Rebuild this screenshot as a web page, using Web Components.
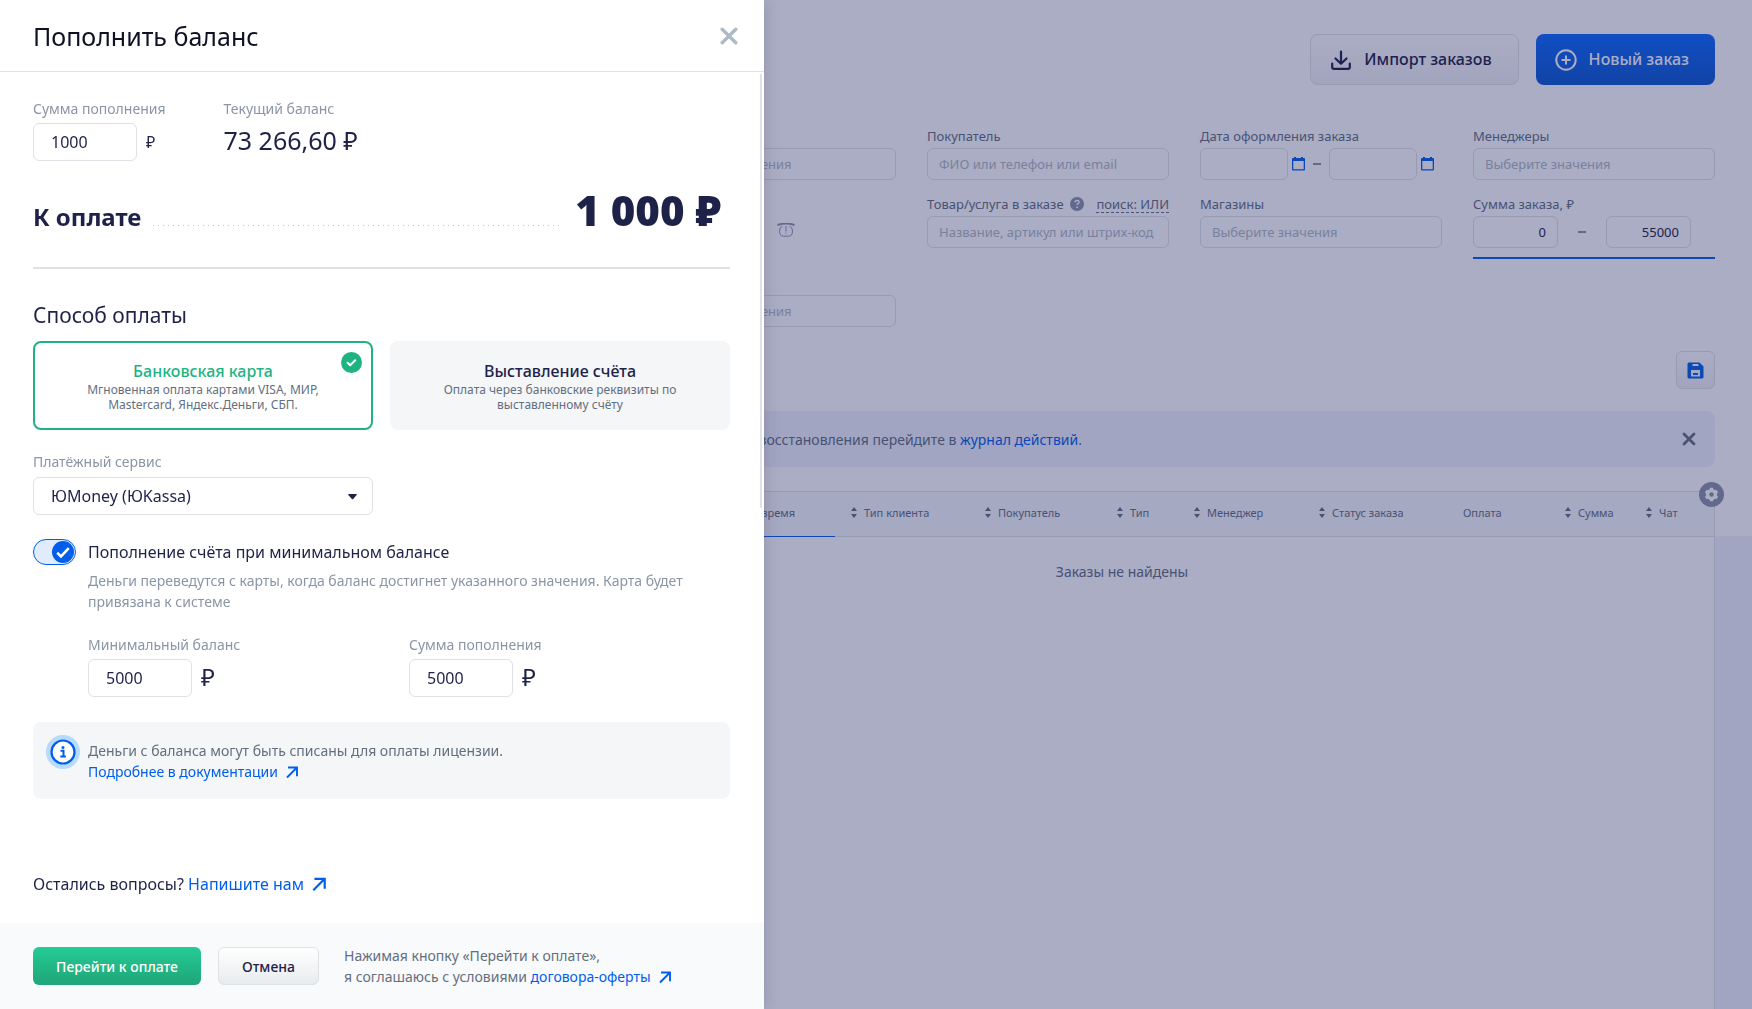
<!DOCTYPE html>
<html lang="ru">
<head>
<meta charset="utf-8">
<meta name="viewport" content="width=device-width, initial-scale=1">
<title>Пополнить баланс</title>
<style>
  :root {
    --ink: #1e2248;
    --text: #636f7f;
    --muted: #8a96a6;
    --faint: #afb9c3;
    --line: #dee2e6;
    --blue: #005eeb;
    --green: #1eb482;
    --panel: #f4f6f8;
  }

  body {
    margin: 0;
    height: 100vh;
    overflow: hidden;
    font-family: "Noto Sans", "Open Sans", sans-serif;
    font-size: 14px;
    line-height: 21px;
    color: var(--ink);
  }
</style>
</head>
<body>
<orders-page></orders-page>
<balance-drawer></balance-drawer>

<script>
// Styles every shadow root starts with
const base = `
  *, *::before, *::after { box-sizing: border-box; }
  :host { display: block; }
  :host([hidden]) { display: none; }
  button, input, select { font: inherit; color: inherit; margin: 0; }
  button { cursor: pointer; }
  a { color: var(--blue); text-decoration: none; }
  svg { display: block; flex: none; }
`;

// Icons
const icons = {
  close: `<svg width="18" height="18" viewBox="0 0 18 18" fill="none" stroke="currentColor" stroke-width="3.400" stroke-linecap="round"><path d="M2.200 2.200l13.600 13.600M15.800 2.200L2.200 15.800"/></svg>`,
  closeSmall: `<svg width="14" height="14" viewBox="0 0 14 14" fill="none" stroke="currentColor" stroke-width="2.800" stroke-linecap="round"><path d="M2 2l10 10M12 2L2 12"/></svg>`,
  arrow: `<svg width="1em" height="1em" viewBox="0 0 14 14" fill="none" stroke="currentColor" stroke-width="1.900"><path d="M3 2.500H12v8.700M12 2.500L2 12.500"/></svg>`,
  download: `<svg width="20" height="20" viewBox="0 0 20 20" fill="none" stroke="currentColor" stroke-width="2.200" stroke-linecap="round" stroke-linejoin="round"><path d="M10 1.500v12M4.500 8.500l5.500 5.200L15.500 8.500M1.200 13.500v3.500q0 1.800 1.800 1.800h14q1.800 0 1.800-1.800v-3.500"/></svg>`,
  plus: `<svg width="22" height="22" viewBox="0 0 22 22" fill="none" stroke="currentColor" stroke-width="2"><circle cx="11" cy="11" r="9.700"/><path d="M11 6.500v9M6.500 11h9"/></svg>`,
  calendar: `<svg width="13" height="14" viewBox="0 0 13 14"><path fill="currentColor" fill-rule="evenodd" d="M2 0h2v1h5V0h2v1h1q1 0 1 1v10.500q0 1-1 1H1q-1 0-1-1V2q0-1 1-1h1zM1.300 4v8.200h10.400V4z"/></svg>`,
  help: `<svg width="14" height="14" viewBox="0 0 14 14"><circle cx="7" cy="7" r="7" fill="currentColor"/><path d="M5 5.400q.1-1.900 2-1.900 2 0 2 1.700 0 .9-1 1.500-.9.500-.9 1.300" fill="none" stroke="#fff" stroke-width="1.400"/><circle cx="7.100" cy="10.200" r=".9" fill="#fff"/></svg>`,
  phone: `<svg width="18" height="14" viewBox="0 0 18 14" fill="none" stroke="currentColor"><path d="M.5 2Q9-.8 17.500 2" stroke-width="2"/><path d="M5.500 3.200Q2.500 4 2.500 8.200q0 5 4 5h5q4 0 4-5 0-4.200-3-5" stroke-width="1"/><path d="M9 3v5.500M9 9.500v1" stroke-width="1"/></svg>`,
  save: `<svg width="17" height="17" viewBox="0 0 17 17"><path fill="currentColor" fill-rule="evenodd" d="M2 .5h10.500l4 4V15q0 1.500-1.500 1.500H2Q.5 16.500.5 15V2Q.5.500 2 .500zM5.500 2v2h6V2zM4 8v6.500h9V8zm2 3h5v2H6z"/></svg>`,
  sort: `<svg width="6" height="11" viewBox="0 0 6 11" fill="currentColor"><path d="M0 4l3-4 3 4zM0 7l3 4 3-4z"/></svg>`,
  gear: `<svg width="25" height="25" viewBox="0 0 25 25"><circle cx="12.500" cy="12.500" r="12.500" fill="#8a96a6"/><g fill="#fff"><circle cx="12.500" cy="12.500" r="5.500"/><path d="M10.900 5.800h3.200l.5 3h-4.200zM10.900 19.200h3.200l.5-3h-4.200z"/><path d="M10.900 5.800h3.200l.5 3h-4.200zM10.900 19.200h3.200l.5-3h-4.200z" transform="rotate(60 12.500 12.500)"/><path d="M10.900 5.800h3.200l.5 3h-4.200zM10.900 19.200h3.200l.5-3h-4.200z" transform="rotate(120 12.500 12.500)"/></g><circle cx="12.500" cy="12.500" r="2.200" fill="#8a96a6"/></svg>`,
  checked: `<svg width="21" height="21" viewBox="0 0 21 21"><circle cx="10.500" cy="10.500" r="10.500" fill="#1eb482"/><path d="M6.600 10.700l2.600 2.500 5-5" fill="none" stroke="#fff" stroke-width="2" stroke-linecap="round" stroke-linejoin="round"/></svg>`,
  caret: `<svg width="9" height="6" viewBox="0 0 9 6"><path d="M.8 0h7.400q1 .2.400 1L5.200 4.900q-.7.700-1.400 0L.4 1q-.600-.8.400-1z" fill="currentColor"/></svg>`,
  info: `<svg width="34" height="34" viewBox="0 0 34 34"><circle cx="17" cy="17" r="17" fill="#b8dafc"/><circle cx="17" cy="17" r="11.500" fill="#fff" stroke="#005eeb" stroke-width="2.200"/><circle cx="17" cy="12.500" r="1.500" fill="#005eeb"/><path d="M14.500 15.700H17.500V21.500M14.300 21.500h5.600" fill="none" stroke="#005eeb" stroke-width="2"/></svg>`
};

function define(name, html) {
  customElements.define(name, class extends HTMLElement {
    constructor() {
      super();
      const root = this.attachShadow({ mode: "open" });
      root.innerHTML = typeof html === "function" ? html(this) : html;
    }
  });
}

// Filter: label on top, control below
class FilterField extends HTMLElement {
  connectedCallback() {
    const kind = this.getAttribute("kind") || "text";
    const label = this.getAttribute("label") || "";
    const hint = this.getAttribute("placeholder") || "";
    const controls = {
      text: `<input id="f" type="text" placeholder="${hint}">`,
      dates: `
        <div class="row dates">
          <input id="f" type="text"><button type="button" aria-label="Дата с">${icons.calendar}</button>
          <span class="dash"></span>
          <input type="text" aria-label="Дата по"><button type="button" aria-label="Дата по">${icons.calendar}</button>
        </div>`,
      range: `
        <div class="row range">
          <input id="f" type="text" value="0"><span class="dash"></span>
          <input type="text" value="55000" aria-label="До">
        </div>`
    };
    this.attachShadow({ mode: "open" }).innerHTML = `
      <style>
        ${base}
        :host { font-size: 13px; line-height: 16px; color: var(--text); min-width: 0; }
        :host([kind="range"]) { padding-bottom: 9px; border-bottom: 2px solid var(--blue); }
        .top { display: flex; align-items: center; height: 20px; padding-bottom: 4px; white-space: nowrap; }
        input {
          width: 100%;
          height: 32px;
          display: block;
          padding: 0 11px;
          border: 1px solid var(--line);
          border-radius: 6px;
          background: none;
          color: var(--ink);
        }
        input::placeholder { color: var(--faint); opacity: 1; }
        .row { display: flex; align-items: center; }
        .dates input { width: 88px; padding: 0 6px; }
        .dates button { border: 0; padding: 0; margin-left: 4px; background: none; color: var(--blue); }
        .dash { width: 8px; height: 2px; background: var(--muted); margin: 0 8px; }
        .range input { width: 85px; text-align: right; }
        .range .dash { margin: 0 20px; }
      </style>
      <div class="top"><label for="f">${label}</label><slot></slot></div>
      ${controls[kind]}
    `;
  }
}
customElements.define("filter-field", FilterField);

define("notice-bar", `
  <style>
    ${base}
    :host {
      display: flex;
      align-items: center;
      justify-content: space-between;
      height: 56px;
      padding: 0 19px 0 198px;
      border-radius: 8px;
      background: #eff3fc;
      color: var(--text);
    }
    button { border: 0; padding: 0; background: none; }
  </style>
  <span><slot></slot></span>
  <button type="button" aria-label="Закрыть">${icons.closeSmall}</button>
`);

define("orders-table", `
  <style>
    ${base}
    :host { position: relative; flex: 1; border: solid var(--line); border-width: 1px 1px 0 0; background: #fff; color: var(--text); }
    table { width: 100%; border-collapse: collapse; table-layout: fixed; }
    th {
      height: 44px;
      padding: 0 0 2px 16px;
      border-bottom: 1px solid var(--line);
      background: #f8f9fc;
      font-size: 11px;
      line-height: 16px;
      font-weight: 400;
      text-align: left;
      white-space: nowrap;
    }
    th.sorted { border-bottom-color: var(--blue); text-align: right; padding-right: 40px; }
    th span { display: flex; align-items: center; gap: 7px; }
    th.plain { padding-left: 18px; }
    td { padding: 24px 0; text-align: center; }
    .settings { position: absolute; top: -10px; right: -10px; padding: 0; border: 0; background: none; }
  </style>
  <table>
    <colgroup>
      <col><col style="width:134px"><col style="width:132px"><col style="width:77px"><col style="width:125px">
      <col style="width:142px"><col style="width:104px"><col style="width:81px"><col style="width:84px">
    </colgroup>
    <thead>
      <tr>
        <th class="sorted">Дата и время</th>
        <th><span>${icons.sort}Тип клиента</span></th>
        <th><span>${icons.sort}Покупатель</span></th>
        <th><span>${icons.sort}Тип</span></th>
        <th><span>${icons.sort}Менеджер</span></th>
        <th><span>${icons.sort}Статус заказа</span></th>
        <th class="plain">Оплата</th>
        <th><span>${icons.sort}Сумма</span></th>
        <th><span>${icons.sort}Чат</span></th>
      </tr>
    </thead>
    <tbody>
      <tr><td colspan="9">Заказы не найдены</td></tr>
    </tbody>
  </table>
  <button class="settings" type="button" aria-label="Настройка колонок">${icons.gear}</button>
`);

define("orders-page", `
  <style>
    ${base}
    :host { display: flex; flex-direction: column; min-height: 100vh; padding-left: 530px; background: #fff; }
    header { display: flex; justify-content: flex-end; gap: 17px; padding: 34px 37px 0 0; }
    header button {
      display: flex;
      align-items: center;
      gap: 13px;
      height: 51px;
      padding: 0 26px 0 20px;
      border: 1px solid var(--line);
      border-radius: 8px;
      background: linear-gradient(#fff, #eff1f3);
      font-size: 16px;
      font-weight: 500;
    }
    header .new { border: 0; padding: 0 26px 0 19px; gap: 12px; background: linear-gradient(#0c6aff, #0c58d0); color: #fff; }
    .filters {
      display: grid;
      grid-template-columns: repeat(4, minmax(0, 1fr));
      gap: 16px 31px;
      padding: 43px 37px 0 124px;
      align-items: start;
    }
    .phone { padding: 27px 0 0 123px; color: var(--muted); }
    .help { margin-left: 6px; color: var(--muted); }
    .mode { margin-left: auto; color: inherit; border-bottom: 1px dashed currentColor; }
    .tools { display: flex; justify-content: flex-end; padding: 24px 37px 22px 0; }
    .tools button {
      display: grid;
      place-items: center;
      width: 39px;
      height: 38px;
      padding: 0;
      border: 1px solid var(--line);
      border-radius: 6px;
      background: linear-gradient(#fff, #eff1f3);
      color: var(--blue);
    }
    notice-bar { margin: 0 37px 24px 0; }
    .list { flex: 1; display: flex; }
    .gutter { width: 37px; margin-top: 45px; background: #eff3fc; }
  </style>
  <header>
    <button type="button">${icons.download}Импорт заказов</button>
    <button type="button" class="new">${icons.plus}Новый заказ</button>
  </header>
  <section class="filters">
    <filter-field label="" placeholder="Выберите значения"></filter-field>
    <filter-field label="Покупатель" placeholder="ФИО или телефон или email"></filter-field>
    <filter-field label="Дата оформления заказа" kind="dates"></filter-field>
    <filter-field label="Менеджеры" placeholder="Выберите значения"></filter-field>
    <div class="phone">${icons.phone}</div>
    <filter-field label="Товар/услуга в заказе" placeholder="Название, артикул или штрих-код">
      <span class="help">${icons.help}</span><a class="mode" href="#">поиск: ИЛИ</a>
    </filter-field>
    <filter-field label="Магазины" placeholder="Выберите значения"></filter-field>
    <filter-field label="Сумма заказа, ₽" kind="range"></filter-field>
    <filter-field label="" placeholder="Выберите значения"></filter-field>
  </section>
  <div class="tools"><button type="button" aria-label="Сохранить фильтр">${icons.save}</button></div>
  <notice-bar>Для восстановления перейдите в <a href="#">журнал действий</a>.</notice-bar>
  <div class="list"><orders-table></orders-table><div class="gutter"></div></div>
`);

// Sum input with the rouble sign after it
define("money-field", el => `
  <style>
    ${base}
    label { display: block; color: var(--muted); }
    div { display: flex; align-items: center; gap: 9px; margin-top: 4px; }
    input {
      width: 104px;
      height: 38px;
      padding: 0 17px;
      border: 1px solid var(--line);
      border-radius: 6px;
      background: #fff;
      font-size: 16px;
    }
    span { font-size: 16px; }
    :host([large]) span { font-size: 24px; padding-bottom: 4px; }
  </style>
  <label for="sum"><slot></slot></label>
  <div><input id="sum" type="text" inputmode="numeric" value="${el.getAttribute("value")}"><span>₽</span></div>
`);

define("pay-option", el => `
  <style>
    ${base}
    label {
      position: relative;
      display: block;
      height: 100%;
      padding: 17px 40px 16px;
      border: 2px solid var(--panel);
      border-radius: 8px;
      background: var(--panel);
      text-align: center;
      cursor: pointer;
    }
    input { position: absolute; opacity: 0; }
    strong { display: block; font-size: 16px; line-height: 22px; font-weight: 500; }
    small { display: block; font-size: 12px; line-height: 15px; color: var(--text); }
    svg { position: absolute; top: 9px; right: 9px; display: none; }
    :host([checked]) label { border-color: var(--green); background: #fff; }
    :host([checked]) strong { color: var(--green); }
    :host([checked]) svg { display: block; }
  </style>
  <label>
    <input type="radio" name="pay" ${el.hasAttribute("checked") ? "checked" : ""}>
    <strong><slot name="title"></slot></strong>
    <small><slot></slot></small>
    ${icons.checked}
  </label>
`);

define("toggle-switch", `
  <style>
    ${base}
    label { display: flex; align-items: center; gap: 12px; font-size: 16px; line-height: 24px; }
    .track { position: relative; display: block; width: 43px; height: 26px; }
    input {
      appearance: none;
      display: block;
      width: 43px;
      height: 26px;
      border: 1px solid var(--blue);
      border-radius: 13px;
      background: #e0ebfc;
    }
    svg { position: absolute; top: 2px; right: 2px; pointer-events: none; }
  </style>
  <label>
    <span class="track">
      <input type="checkbox" role="switch" checked>
      <svg width="22" height="22" viewBox="0 0 22 22"><circle cx="11" cy="11" r="11" fill="#005eeb"/><path d="M5.200 11.800l3.800 3.700 7.800-8.300" fill="none" stroke="#fff" stroke-width="2.600"/></svg>
    </span>
    <slot></slot>
  </label>
`);

// Link that opens outside the app
define("arrow-link", `
  <style>
    ${base}
    :host { display: inline-block; }
    a { display: inline-flex; align-items: center; gap: 7px; }
  </style>
  <a href="#"><slot></slot>${icons.arrow}</a>
`);

define("balance-drawer", `
  <style>
    ${base}
    :host { position: fixed; inset: 0; background: rgba(28, 33, 96, .37); }
    aside {
      display: flex;
      flex-direction: column;
      width: 764px;
      max-width: 100%;
      height: 100%;
      background: #fff;
      box-shadow: 0 0 16px rgba(30, 34, 72, .2);
    }
    header {
      display: flex;
      align-items: center;
      justify-content: space-between;
      height: 72px;
      padding: 0 26px 0 33px;
      border-bottom: 1px solid var(--line);
    }
    h1 { margin: 0; font-size: 25px; line-height: 32px; font-weight: 400; color: #0f1124; }
    header button { border: 0; padding: 0; background: none; color: #afbac5; }
    main { position: relative; flex: 1; min-height: 0; padding: 26px 34px 0 33px; }
    .thumb { position: absolute; top: 2px; right: 2px; width: 2px; height: 51%; background: var(--line); }
    .sums { display: flex; gap: 58px; }
    .label { color: var(--muted); }
    .balance { font-size: 25px; line-height: 32px; margin-top: 5px; }
    .total {
      display: flex;
      align-items: baseline;
      gap: 12px;
      margin-top: 19px;
      padding: 0 8px 20px 0;
      border-bottom: 2px solid var(--line);
      font-size: 24px;
      line-height: 60px;
      font-weight: 700;
    }
    .total i { flex: 1; height: 1px; background: repeating-linear-gradient(90deg, #c4c8cc 0 1px, #fff 1px 5px); }
    .total b { font-size: 42px; margin-left: 4px; }
    h2 { margin: 31px 0 11px; font-size: 21px; line-height: 30px; font-weight: 400; }
    .options { display: grid; grid-template-columns: 1fr 1fr; gap: 17px; }
    .service { width: calc(50% - 9px); margin-top: 21px; }
    .service label { display: block; color: var(--muted); margin-bottom: 5px; }
    .select { position: relative; }
    select {
      appearance: none;
      width: 100%;
      height: 38px;
      padding: 0 17px;
      border: 1px solid var(--line);
      border-radius: 6px;
      background: #fff;
      font-size: 16px;
    }
    .select svg { position: absolute; right: 16px; top: 17px; pointer-events: none; }
    toggle-switch { margin-top: 24px; }
    .auto { padding-left: 55px; }
    .auto p { margin: 5px 0 22px; color: var(--muted); }
    .limits { display: grid; grid-template-columns: 1fr 1fr; }
    .info {
      display: flex;
      gap: 8px;
      margin-top: 25px;
      padding: 13px;
      min-height: 77px;
      border-radius: 8px;
      background: var(--panel);
      color: var(--text);
    }
    .info p { margin: 5px 0 0; }
    .ask { margin: 73px 0 0; font-size: 16px; line-height: 24px; }
    footer { display: flex; align-items: center; height: 86px; padding: 0 33px; background: #f9fafc; color: var(--text); }
    footer button { height: 38px; padding: 0 23px; border-radius: 6px; font-weight: 500; }
    .pay { border: 0; background: linear-gradient(#24cb95, #20a578); color: #fff; }
    .cancel { margin: 0 25px 0 17px; border: 1px solid var(--line); background: linear-gradient(#fff, #e8ebed); color: var(--ink); }
    footer p { margin: 0; }
  </style>
  <aside>
    <header>
      <h1>Пополнить баланс</h1>
      <button type="button" aria-label="Закрыть">${icons.close}</button>
    </header>
    <main>
      <div class="thumb"></div>
      <div class="sums">
        <money-field value="1000">Сумма пополнения</money-field>
        <div>
          <div class="label">Текущий баланс</div>
          <div class="balance">73 266,60 ₽</div>
        </div>
      </div>
      <div class="total"><span>К оплате</span><i></i><b>1 000 ₽</b></div>

      <h2>Способ оплаты</h2>
      <div class="options">
        <pay-option checked><span slot="title">Банковская карта</span>Мгновенная оплата картами VISA, МИР, Mastercard, Яндекс.Деньги, СБП.</pay-option>
        <pay-option><span slot="title">Выставление счёта</span>Оплата через банковские реквизиты по выставленному счёту</pay-option>
      </div>
      <div class="service">
        <label for="service">Платёжный сервис</label>
        <div class="select">
          <select id="service"><option>ЮMoney (ЮKassa)</option></select>
          ${icons.caret}
        </div>
      </div>

      <toggle-switch>Пополнение счёта при минимальном балансе</toggle-switch>
      <div class="auto">
        <p>Деньги переведутся с карты, когда баланс достигнет указанного значения. Карта будет привязана к системе</p>
        <div class="limits">
          <money-field large value="5000">Минимальный баланс</money-field>
          <money-field large value="5000">Сумма пополнения</money-field>
        </div>
      </div>
      <div class="info">
        ${icons.info}
        <p>Деньги с баланса могут быть списаны для оплаты лицензии.<br><arrow-link>Подробнее в документации</arrow-link></p>
      </div>
      <p class="ask">Остались вопросы? <arrow-link>Напишите нам</arrow-link></p>
    </main>
    <footer>
      <button type="button" class="pay">Перейти к оплате</button>
      <button type="button" class="cancel">Отмена</button>
      <p>Нажимая кнопку «Перейти к оплате»,<br>я соглашаюсь с условиями <arrow-link>договора-оферты</arrow-link></p>
    </footer>
  </aside>
`);
</script>
</body>
</html>
